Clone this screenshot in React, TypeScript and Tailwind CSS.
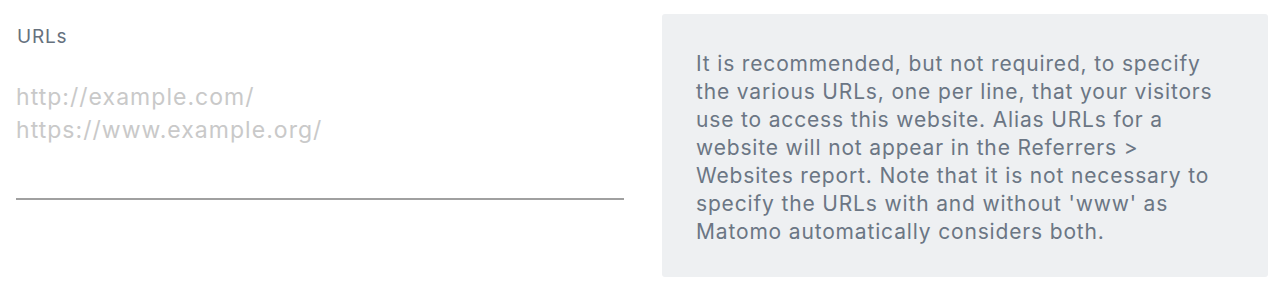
export default function App() {
  return (
    <div className="flex w-[1280px] h-[292px] bg-white pl-4 pr-3 pt-[14px] font-['Inter','Liberation_Sans',sans-serif]">
      <div className="w-[608px] shrink-0 mr-[38px]">
        <label htmlFor="alias-urls" className="block mt-[12px] pl-[1px] text-[19px] leading-[22px] tracking-[0.04em] text-[#66717e]">
          URLs
        </label>
        <textarea
          id="alias-urls"
          className="block w-full h-[119px] mt-[33px] p-0 resize-none outline-none bg-transparent border-0 border-b-2 border-[#a0a0a0] text-[23px] leading-[33px] tracking-[0.045em] text-[#333] placeholder:text-[#c9c9c9]"
          placeholder={"http://example.com/\nhttps://www.example.org/"}
        />
      </div>
      <div className="w-[606px] h-[263px] shrink-0 rounded-[3px] bg-[#eef0f2] pl-[34px] pr-[47px] pt-[36px]">
        <p className="text-[21px] leading-[28px] tracking-[0.04em] text-[#6b7684]">
          It is recommended, but not required, to specify the various URLs, one per line, that your visitors use to access this website. Alias URLs for a website will not appear in the Referrers &gt; Websites report. Note that it is not necessary to specify the URLs with and without 'www' as Matomo automatically considers both.
        </p>
      </div>
    </div>
  );
}
